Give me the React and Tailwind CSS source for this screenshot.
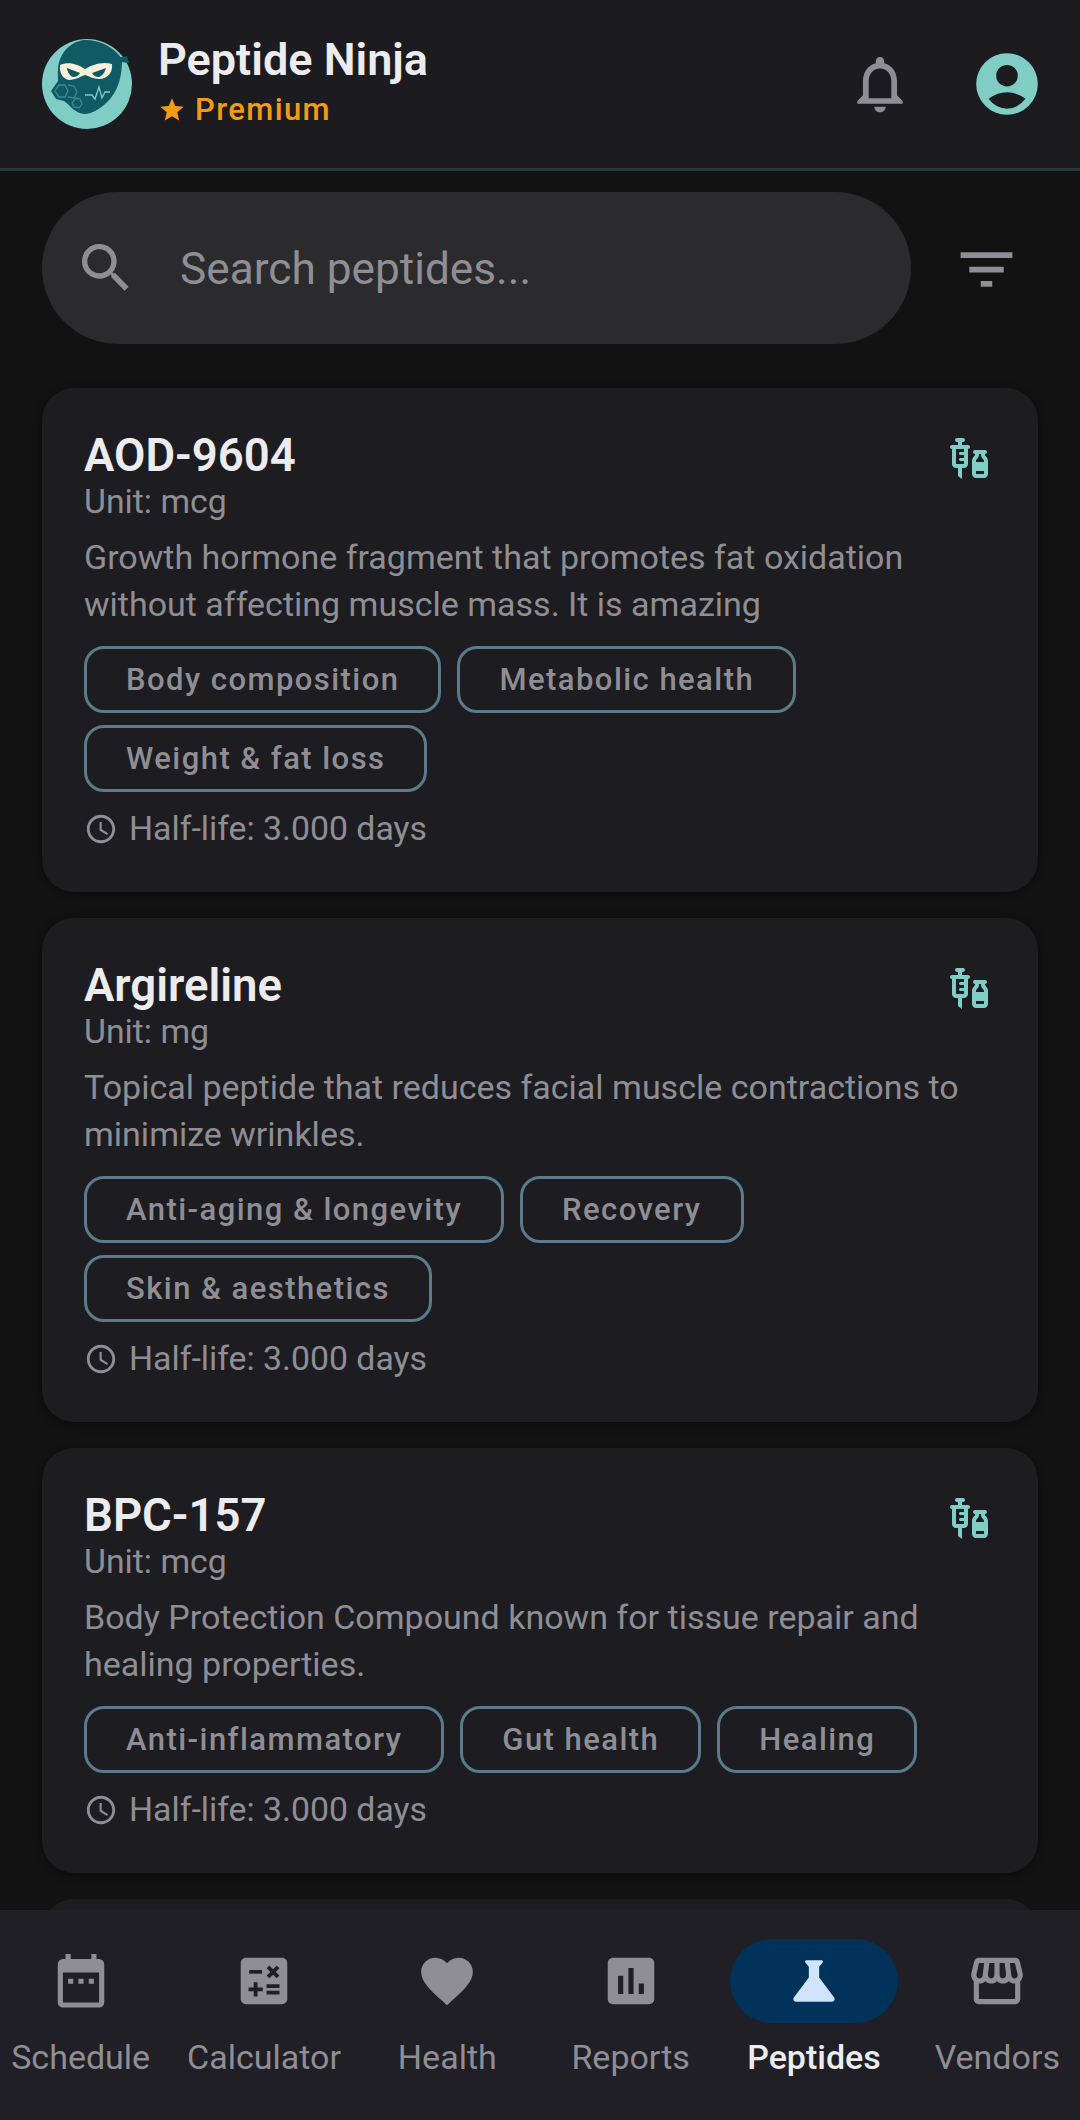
import React from "react";
import { MdNotificationsNone, MdSearch, MdFilterList, MdAccessTime, MdCalculate, MdFavorite, MdAssessment, MdScience, MdStorefront, MdVaccines, MdStar } from "react-icons/md";

const Logo = () => (
  <svg viewBox="0 0 90 90" className="w-[90px] h-[90px] shrink-0 mt-[1px]">
    <circle cx="45" cy="45" r="45" fill="#7fcdc5" />
    <path d="M43 1 C58 1 72 8 80 20 C80 34 78 48 68 60 C60 69 50 75 42 75 C34 74 28 68 24 62 C18 56 15 44 16 30 C17 15 28 2 43 1 Z" fill="#0f5a63" />
    <path d="M75 19 L85 17 L87 24 L79 23 Z" fill="#0f5a63" />
    <path d="M18 26 C26 22 36 25 43 30 C50 26 60 22 70 25 C71 33 66 40 57 40 C51 40 47 37 43 36 C39 37 34 41 27 41 C21 40 17 34 18 26Z" fill="#f6f1dc" />
    <path d="M25 29 L38 34 C36 38 31 39 29 37 C27 35 25 32 25 29Z M64 29 L50 34 C52 38 57 39 59 37 C62 35 63 32 64 29Z" fill="#0f5a63" />
    <path d="M9 52 L16 42 L28 43 L40 55 L41 68 L32 70 L22 62 L14 60 Z" fill="#0f5a63" />
    <g fill="none" stroke="#3a8d92" strokeWidth="1.3">
      <path d="M17 46 L23 46 L26 52 L23 58 L17 58 L13 52 Z" />
      <path d="M26 46 L32 47 L35 53 L32 59 L26 58" />
      <path d="M34 59 L38 60 L40 65 L37 69 L32 68 L30 64 Z" />
    </g>
    <path d="M43 56 H50 L53 60 L57 48 L60 59 L63 53 H68" fill="none" stroke="#7fcdc5" strokeWidth="1.3" />
  </svg>
);

const CalendarDots = ({ className }) => (
  <svg viewBox="0 0 24 24" className={className} fill="currentColor">
    <path d="M18 3.5V1.5h-2v2H8v-2H6v2H5a2 2 0 0 0-2 2V20.3a2 2 0 0 0 2 2h14a2 2 0 0 0 2-2V5.5a2 2 0 0 0-2-2zM19 20.3H5V8.7h14zM7 11.1h2v2H7zM11 11.1h2v2h-2zM15 11.1h2v2h-2z" />
  </svg>
);

const Account = ({ className }) => (
  <svg viewBox="0 0 24 24" className={className} fill="currentColor" fillRule="evenodd">
    <path d="M12 2a10 10 0 1 0 0 20a10 10 0 0 0 0-20zM12 5.8a3.5 3.5 0 1 1 0 7a3.5 3.5 0 0 1 0-7zM6 16.8Q12 12.6 18 16.8Q15.5 20 12 20Q8.5 20 6 16.8Z" />
  </svg>
);

const cards = [
  { name: "AOD-9604", unit: "mcg", desc: ["Growth hormone fragment that promotes fat oxidation", "without affecting muscle mass. It is amazing"], rows: [["Body composition", "Metabolic health"], ["Weight & fat loss"]] },
  { name: "Argireline", unit: "mg", desc: ["Topical peptide that reduces facial muscle contractions to", "minimize wrinkles."], rows: [["Anti-aging & longevity", "Recovery"], ["Skin & aesthetics"]] },
  { name: "BPC-157", unit: "mcg", desc: ["Body Protection Compound known for tissue repair and", "healing properties."], rows: [["Anti-inflammatory", "Gut health", "Healing"]] },
];

const Card = ({ c }) => (
  <div className="relative rounded-[32px] bg-[#1d1c21] px-[42px] pt-[42px] pb-[42px] shadow-[0_2px_8px_rgba(0,0,0,0.4)]">
    <MdVaccines className="absolute right-[44px] top-[46px] text-[#7fcdc5]" size={48} />
    <div className="text-[45.5px] leading-[51px] font-semibold text-[#ececee]">{c.name}</div>
    <div className="text-[33.8px] leading-[42px] text-[#8f8e94]">Unit: {c.unit}</div>
    <div className="mt-[11px] text-[34px] leading-[47px] text-[#8f8e94]">
      {c.desc.map((d) => <div key={d}>{d}</div>)}
    </div>
    <div className="mt-[18px] flex flex-col gap-[12px]">
      {c.rows.map((r, i) => (
        <div key={i} className="flex gap-[16px]">
          {r.map((t) => (
            <div key={t} className="flex h-[67px] items-center rounded-[20px] border-[3px] border-[#5b7a8a] px-[39px] pt-[2px] text-[31px] font-medium tracking-[1.45px] text-[#8f8e94]">{t}</div>
          ))}
        </div>
      ))}
    </div>
    <div className="mt-[16px] flex items-center gap-[11px] text-[33.8px] leading-[42px] text-[#8f8e94]">
      <MdAccessTime size={34} />
      <span>Half-life: 3.000 days</span>
    </div>
  </div>
);

const navItems = [
  { label: "Schedule", Icon: CalendarDots },
  { label: "Calculator", Icon: MdCalculate },
  { label: "Health", Icon: MdFavorite },
  { label: "Reports", Icon: MdAssessment },
  { label: "Peptides", Icon: MdScience, active: true },
  { label: "Vendors", Icon: MdStorefront },
];

export default function App() {
  return (
    <div className="flex h-[2120px] w-[1080px] flex-col overflow-hidden bg-[#121212] font-['Roboto',sans-serif]">
      <header className="flex h-[171px] shrink-0 items-center border-b-[3px] border-[#2a3838] bg-[#1c1b20] pl-[42px] pr-[42px] pb-[2px]">
        <Logo />
        <div className="ml-[26px] flex-1">
          <div className="text-[45px] leading-[50px] font-semibold text-[#ececee] -mt-[2px]">Peptide Ninja</div>
          <div className="mt-[5px] flex items-center gap-[9px] text-[31px] leading-[40px] font-medium tracking-[1.4px] text-[#f39c12]">
            <MdStar size={28} />
            <span>Premium</span>
          </div>
        </div>
        <MdNotificationsNone className="text-[#8f8e94] mr-[56px] mt-[2px]" size={68} />
        <Account className="h-[74px] w-[74px] text-[#7fcdc5] -mr-[6px] mt-[1px]" />
      </header>

      <main className="flex-1 overflow-hidden px-[42px]">
        <div className="mt-[21px] flex items-center">
          <div className="flex h-[152px] w-[869px] items-center rounded-[76px] bg-[#2b2b2d] pl-[32px]">
            <MdSearch className="text-[#8f8e94]" size={64} />
            <span className="ml-[42px] pt-[2px] text-[44.2px] text-[#8f8e94]">Search peptides...</span>
          </div>
          <MdFilterList className="ml-[41px] text-[#8f8e94] mt-[3px]" size={69} />
        </div>
        <div className="mt-[44px] flex flex-col gap-[26px]">
          {cards.map((c) => <Card key={c.name} c={c} />)}
          <div className="h-[200px] rounded-[32px] bg-[#1d1c21]" />
        </div>
      </main>

      <nav className="h-[210px] shrink-0 overflow-hidden bg-[#1f1f25]">
        <div className="-ml-[11px] -mr-[9px] grid grid-cols-6 pt-[29px]">
          {navItems.map(({ label, Icon, active }) => (
            <div key={label} className="flex flex-col items-center">
              <div className={`flex h-[84px] w-[168px] items-center justify-center rounded-[42px] ${active ? "bg-[#00325a] text-[#d0e4ff]" : "text-[#8f8e94]"}`}>
                <Icon className="h-[62px] w-[62px]" />
              </div>
              <div className={`mt-[12px] text-[34px] leading-[44px] ${active ? "font-medium text-[#ececee]" : "text-[#8f8e94]"}`}>{label}</div>
            </div>
          ))}
        </div>
      </nav>
    </div>
  );
}
